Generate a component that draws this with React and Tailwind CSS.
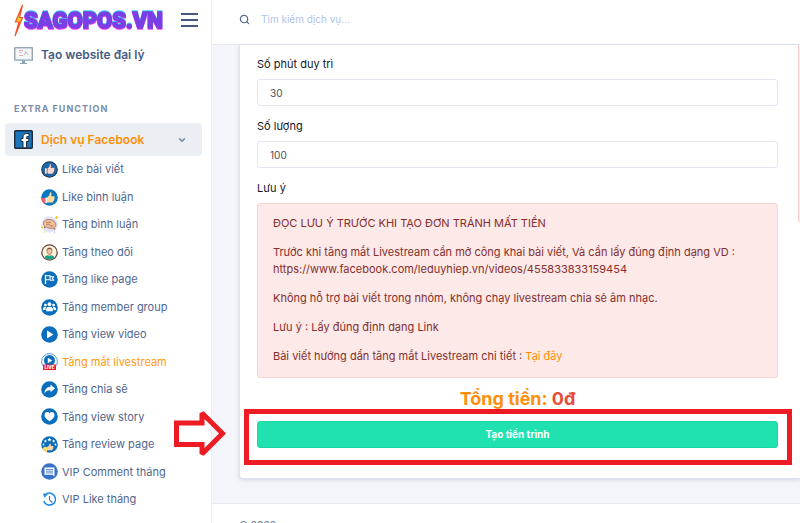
import { useState } from "react";
import { ChevronDown, Search } from "lucide-react";

const services = [
  { name: "Like bài viết", icon: LikeIcon },
  { name: "Like bình luận", icon: LikeCommentIcon },
  { name: "Tăng bình luận", icon: CommentIcon },
  { name: "Tăng theo dõi", icon: FollowIcon },
  { name: "Tăng like page", icon: PageIcon },
  { name: "Tăng member group", icon: GroupIcon },
  { name: "Tăng view video", icon: VideoIcon },
  { name: "Tăng mắt livestream", icon: LiveIcon },
  { name: "Tăng chia sẽ", icon: ShareIcon },
  { name: "Tăng view story", icon: StoryIcon },
  { name: "Tăng review page", icon: ReviewIcon },
  { name: "VIP Comment tháng", icon: VipCommentIcon },
  { name: "VIP Like tháng", icon: VipLikeIcon },
];

export default function App() {
  const [active, setActive] = useState("Tăng mắt livestream");

  return (
    <div className="flex h-screen overflow-hidden bg-[#f4f5fa] font-['Inter',sans-serif] text-[11px] text-[#12171f]">

      {/* SIDEBAR */}
      <aside className="w-[212px] shrink-0 border-r border-[#ebeef5] bg-white">
        <div className="flex h-10 items-center justify-between pr-[13px] pl-3">
          <Logo />
          <button aria-label="Menu" className="flex w-[17px] flex-col gap-1">
            <span className="h-[2px] w-full bg-[#41597f]" />
            <span className="h-[2px] w-full bg-[#41597f]" />
            <span className="h-[2px] w-full bg-[#41597f]" />
          </button>
        </div>

        <a href="#website" className="flex h-[30px] items-center gap-2 pl-[14px] text-xs font-semibold text-[#465c85]">
          <MonitorIcon />
          Tạo website đại lý
        </a>

        <h2 className="mt-[30px] pl-[14px] text-[9px] leading-[18px] font-bold tracking-[1px] text-[#7b8da8]">
          EXTRA FUNCTION
        </h2>

        <div className="mt-[5px] pr-[9px] pl-[5px]">
          <button className="flex h-[33px] w-full items-center rounded-[4px] bg-[#ebeef3] pr-[15px] pl-[9px] text-xs font-semibold text-[#ff8f0a]">
            <FacebookIcon />
            <span className="ml-2">Dịch vụ Facebook</span>
            <ChevronDown className="ml-auto size-[10px] text-[#6f86a5]" strokeWidth={3.5} />
          </button>
        </div>

        <nav className="grid h-[357px] auto-rows-fr pl-[41px]">
          {services.map(({ name, icon: Icon }) => (
            <a
              key={name}
              href="#service"
              onClick={() => setActive(name)}
              className={`flex items-center gap-1 ${active === name ? "text-[#ff9a0c]" : "text-[#506690]"}`}
            >
              <Icon />
              {name}
            </a>
          ))}
        </nav>
      </aside>

      {/* CONTENT */}
      <div className="flex min-w-0 flex-1 flex-col">
        <header className="flex h-[45px] shrink-0 items-center border-b border-[#e6e9f4] bg-white pb-[5px] pl-[27px]">
          <Search className="size-[11px] text-[#506690]" strokeWidth={2.5} />
          <input
            type="search"
            aria-label="Tìm kiếm dịch vụ"
            placeholder="Tìm kiếm dịch vụ..."
            className="ml-[11px] flex-1 text-[10px] outline-none placeholder:text-[#b0c3e8]"
          />
        </header>

        <main className="pl-[27px]">
          <div className="flex rounded-bl-[4px] border-b border-l border-[#dfe2ee] bg-white shadow-[0_1px_4px_rgba(18,38,63,0.14)]">
            <form className="min-w-0 flex-1 pt-[11px] pr-5 pb-[30px] pl-[17px]">
              <Field id="minutes" label="Số phút duy trì" value="30" />
              <Field id="amount" label="Số lượng" value="100" />

              <p className="mb-[6px] leading-[17px]">Lưu ý</p>
              <div className="space-y-3 rounded-[3px] border border-[#f8d4d4] bg-[#fce9e8] px-[15px] pt-[11px] pb-3 leading-[17px] text-[#862f2c]">
                <p>ĐỌC LƯU Ý TRƯỚC KHI TẠO ĐƠN TRÁNH MẤT TIỀN</p>
                <p>
                  Trước khi tăng mắt Livestream cần mở công khai bài viết, Và cần lấy đúng định dạng VD :
                  <br />
                  https://www.facebook.com/leduyhiep.vn/videos/455833833159454
                </p>
                <p>Không hỗ trợ bài viết trong nhóm, không chạy livestream chia sẻ âm nhạc.</p>
                <p>Lưu ý : Lấy đúng định dạng Link</p>
                <p>
                  Bài viết hướng dẩn tăng mắt Livestream chi tiết :{" "}
                  <a href="#guide" className="text-[#ff8f0a]">Tại đây</a>
                </p>
              </div>

              <h3 className="mt-[9px] text-center text-lg leading-6 font-bold text-[#ff8f0a]">
                Tổng tiền: <span className="text-[#e74c3c]">0đ</span>
              </h3>

              <div className="relative mt-[10px]">
                <button
                  type="button"
                  className="h-[27px] w-full rounded-[3px] border border-[#1bd7a5] bg-[#1fe2b0] text-[10px] font-bold text-white"
                >
                  Tạo tiến trình
                </button>
                <div className="pointer-events-none absolute -top-3 -right-[14px] -bottom-[17px] -left-[13px] border-5 border-[#ed1c24]">
                  <svg className="absolute -top-[5px] right-full mr-[23px] h-[49px] w-[52px]" viewBox="0 0 52 49">
                    <path
                      d="M2.500 14H28V4L48.500 24.500L28 45V35.500H2.500Z"
                      fill="none"
                      stroke="#ed1c24"
                      strokeWidth="5"
                      strokeLinejoin="miter"
                      strokeMiterlimit="1.500"
                    />
                  </svg>
                </div>
              </div>
            </form>

            <div className="h-[177px] w-[2px] shrink-0 rounded-bl-[3px] border-b border-l border-[#f8cfcf] bg-[#fce9e8]" />
          </div>
        </main>

        <footer className="mt-6 flex-1 border-t border-[#e9ecf3] bg-white pt-[14px] pl-[27px] text-[10px] leading-[15px] font-semibold text-[#7b8da8]">
          © 2022
        </footer>
      </div>
    </div>
  );
}

function Field({ id, label, value }) {
  return (
    <div className="mb-3">
      <label htmlFor={id} className="mb-[6px] block leading-[17px]">{label}</label>
      <input
        id={id}
        defaultValue={value}
        className="block h-[27px] w-full rounded-[3px] border border-[#e4e5f1] bg-white px-3 text-[10px] text-[#495057] outline-none"
      />
    </div>
  );
}

function Logo() {
  return (
    <svg className="h-9 w-[152px]" viewBox="0 0 152 36" role="img" aria-label="SAGOPOS.VN">
      <path d="M10.500 3L3.500 20H7L3 34L10.500 15.500H7.500Z" fill="#ffc928" stroke="#f0522d" strokeWidth="1.200" />
      <text
        x="12"
        y="26"
        fontFamily="Roboto"
        fontWeight="900"
        fontSize="22"
        fill="#7a3fe4"
        stroke="#7a3fe4"
        strokeWidth="1.500"
        className="[filter:drop-shadow(0_-1px_0_#35d4f4)_drop-shadow(0_1px_0_#f03cf5)]"
      >
        SAGOPOS.VN
      </text>
    </svg>
  );
}

function MonitorIcon() {
  return (
    <svg className="size-[19px]" viewBox="0 0 19 19">
      <rect x="0.800" y="1.800" width="17.400" height="12.400" fill="#f3f7f9" stroke="#6d8192" strokeWidth="1" />
      <path d="M1 13.800H18" stroke="#b7cad5" strokeWidth="1.500" />
      <path d="M5 4.500H9M5 9.500H9" stroke="#f0a3a3" strokeWidth="1" />
      <path d="M5 6.500H8M11 5L14 9" stroke="#f5b8b8" strokeWidth="1.200" />
      <path d="M10 9L12 6" stroke="#86c6e0" strokeWidth="1" />
      <path d="M8 14.500H11V17H13V18H6V17H8Z" fill="#8ba4b3" />
    </svg>
  );
}

function FacebookIcon() {
  return (
    <svg className="size-[19px]" viewBox="0 0 19 19">
      <rect x="0.700" y="0.700" width="17.600" height="17.600" rx="1" fill="#1b76bc" stroke="#1d2b3d" strokeWidth="1.400" />
      <path d="M9 17.800V11.500H7V8.500H9V7C9 4.500 10.500 3.500 12.500 3.500H15V6.500H13.500C12.700 6.500 12.500 6.800 12.500 7.500V8.500H15L14.500 11.500H12.500V17.800Z" fill="#fff" stroke="#1d2b3d" strokeWidth="1" />
    </svg>
  );
}

function RoundIcon({ fill = "#0a6ebd", children }) {
  return (
    <svg className="size-[17px] shrink-0" viewBox="0 0 17 17">
      <circle cx="8.500" cy="8.500" r="8.300" fill={fill} />
      {children}
    </svg>
  );
}

function LikeIcon() {
  return (
    <RoundIcon fill="#1f2f46">
      <circle cx="8.500" cy="8.500" r="7.300" fill="#1b69b3" />
      <path d="M6 7.500L8 6L8.800 2.800C10.500 2.800 10.600 4.500 10 6.500H13C14 6.500 14 8 13.300 8.200C14 9 13.600 9.800 13 10C13.400 11 12.800 11.500 12.300 11.600C12.400 12.600 11.800 13 11 13H7.500L6 12.300Z" fill="#fad7cf" stroke="#25344d" strokeWidth="0.400" />
      <rect x="3.800" y="7" width="2.200" height="6" fill="#e9edf3" stroke="#25344d" strokeWidth="0.400" />
    </RoundIcon>
  );
}

function LikeCommentIcon() {
  return (
    <RoundIcon fill="#0878c0">
      <path d="M0.200 9H5V14.500L2.500 14.300A8.300 8.300 0 0 1 0.200 9Z" fill="#f3606b" />
      <path d="M4.500 8.500H6V14H4.500Z" fill="#fff" />
      <path d="M6 8.500L8.300 6.500L9 3.300C10.800 3.300 10.800 5.300 10.200 7.200H13C14 7.500 13.900 8.700 13.300 9C13.900 9.700 13.500 10.600 13 10.800C13.200 11.700 12.700 12.200 12.300 12.300C12.300 13.200 11.800 13.500 11 13.500H6Z" fill="#ffdb9c" />
    </RoundIcon>
  );
}

function CommentIcon() {
  return (
    <RoundIcon fill="#e4e3f8">
      <path d="M2.500 7.500C2.500 4.500 5 3.500 8 3.500S13 4.500 13.500 6C15.500 7 15.300 10.500 13.500 11.500L14 13.300L11.500 12.300H8L5.500 10.800L3.500 12L3.700 10C2.800 9.300 2.500 8.500 2.500 7.500Z" fill="#f6bf95" stroke="#8b6053" strokeWidth="0.700" />
      <path d="M5 6.300H10M5 8.300H9M8.500 10H12.500" stroke="#a0705c" strokeWidth="0.800" />
      <path d="M15.500 0V3M14 1.500H17" stroke="#f7c325" strokeWidth="1.200" />
      <circle cx="1" cy="11.500" r="0.900" fill="#f7c325" />
      <circle cx="13.500" cy="16" r="0.600" fill="#5b8def" />
      <circle cx="3.500" cy="16" r="0.600" fill="#f7c325" />
    </RoundIcon>
  );
}

function FollowIcon() {
  return (
    <RoundIcon fill="#6c4b3e">
      <circle cx="8.500" cy="8.500" r="7" fill="#fff3dc" />
      <path d="M3.600 13.500C4 11.800 5.500 11.300 8.500 11.300S13 11.800 13.400 13.500A7 7 0 0 1 3.600 13.500Z" fill="#16a08b" />
      <path d="M7.300 9H9.700V11.500L8.500 12.500L7.300 11.500Z" fill="#f0b48f" />
      <ellipse cx="8.500" cy="7" rx="2.500" ry="3.200" fill="#f8c8a4" stroke="#78503d" strokeWidth="0.500" />
      <path d="M5.700 7.500C5 2.500 12 2.500 11.300 7.500L10.500 5.300H6.500Z" fill="#80503c" />
    </RoundIcon>
  );
}

function PageIcon() {
  return (
    <RoundIcon>
      <path d="M4.500 3.800V13" stroke="#fff" strokeWidth="1.300" />
      <path d="M5 4.800H9V8.800H5M9 5.700H12.500L11.500 7.500L12.500 9.300H9" fill="none" stroke="#fff" strokeWidth="1.100" />
    </RoundIcon>
  );
}

function GroupIcon() {
  return (
    <RoundIcon>
      <g fill="#fff">
        <circle cx="8.500" cy="5.200" r="1.900" />
        <circle cx="4.400" cy="6.100" r="1.400" />
        <circle cx="12.600" cy="6.100" r="1.400" />
        <path d="M5.200 12.300V10C5.200 7 11.800 7 11.800 10V12.300Z" />
        <path d="M2 11V9.500C2 7.900 4 7.600 5.200 8.200C4.600 9 4.500 9.800 4.500 11Z" />
        <path d="M15 11V9.500C15 7.900 13 7.600 11.800 8.200C12.400 9 12.500 9.800 12.500 11Z" />
      </g>
    </RoundIcon>
  );
}

function VideoIcon() {
  return (
    <RoundIcon>
      <path d="M6 4.500L12.500 8.500L6 12.500Z" fill="#fff" />
    </RoundIcon>
  );
}

function LiveIcon() {
  return (
    <svg className="size-[17px] shrink-0" viewBox="0 0 17 17">
      <circle cx="8.500" cy="8.500" r="7.900" fill="#fff" stroke="#3f8cc6" strokeWidth="0.900" />
      <circle cx="8.500" cy="7.500" r="5.500" fill="#0a6ebd" />
      <path d="M6.800 4.800L11.300 7.500L6.800 10.200Z" fill="#fff" />
      <rect x="2" y="11.500" width="13" height="5.500" fill="#ed1c24" />
      <text x="8.500" y="16" textAnchor="middle" fontFamily="Inter" fontWeight="800" fontSize="4.500" fill="#fff">LIVE</text>
    </svg>
  );
}

function ShareIcon() {
  return (
    <RoundIcon>
      <path d="M9.500 3.500L14 7.500L9.500 11.300V9.200C6.500 9 4.800 10.200 3.500 12.500C3.500 8.700 5.500 6 9.500 5.800Z" fill="#fff" />
    </RoundIcon>
  );
}

function StoryIcon() {
  return (
    <RoundIcon>
      <path d="M8.500 13.200C5.500 11 3.500 9.400 3.500 7C3.500 3.800 7.300 3.200 8.500 5.500C9.700 3.200 13.500 3.800 13.500 7C13.500 9.400 11.500 11 8.500 13.200Z" fill="#fff" />
    </RoundIcon>
  );
}

function ReviewIcon() {
  return (
    <RoundIcon>
      <path d="M1.300 12.500L4 10.500L6 11.500V16.400A8.300 8.300 0 0 1 1.300 12.500Z" fill="#ffdc69" />
      <path d="M6 11L8 9.700L8.700 7.500C10 7.500 10.200 8.700 9.700 10H12C13 10.500 12.500 11.300 12.200 11.600C12.500 12.300 12 13 11.700 13.200C11.700 14 11.200 14.300 10.500 14.300H6Z" fill="#ffd6a3" />
      <path d="M8.500 1.500L9.100 2.900L10.600 3L9.500 4L9.800 5.500L8.500 4.700L7.200 5.500L7.500 4L6.400 3L7.900 2.900Z" fill="#fff" />
      <path d="M4.400 3.500L4.900 4.600L6 4.700L5.100 5.500L5.400 6.600L4.400 6L3.400 6.600L3.700 5.500L2.800 4.700L3.900 4.600ZM12.600 3.500L13.100 4.600L14.200 4.700L13.300 5.500L13.600 6.600L12.600 6L11.600 6.600L11.900 5.500L11 4.700L12.100 4.600Z" fill="#fff" />
      <circle cx="2.500" cy="8.500" r="0.900" fill="#fff" />
      <circle cx="14.500" cy="8.500" r="0.900" fill="#fff" />
    </RoundIcon>
  );
}

function VipCommentIcon() {
  return (
    <RoundIcon fill="#3771c8">
      <path d="M3.500 4.500H13.500V13.500L11.500 11.700H3.500Z" fill="#fff" />
      <path d="M5 6.500H12M5 8.200H12M5 9.900H12" stroke="#3771c8" strokeWidth="0.800" />
    </RoundIcon>
  );
}

function VipLikeIcon() {
  return (
    <svg className="size-[17px] shrink-0" viewBox="0 0 17 17">
      <path d="M5 3.200A6 6 0 1 1 2.800 10" fill="none" stroke="#1488ee" strokeWidth="1.500" />
      <path d="M2 2.500L6.800 2.800L3.500 7Z" fill="#1488ee" />
      <path d="M8.500 5V8.800L11.300 11.500" fill="none" stroke="#3c6f9f" strokeWidth="1.100" />
    </svg>
  );
}
